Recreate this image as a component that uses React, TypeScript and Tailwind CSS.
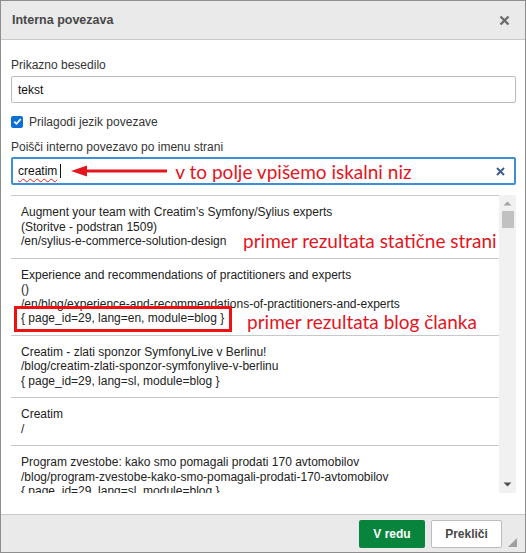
import React from "react";

type Result = { lines: string[] };

const results: Result[] = [
  {
    lines: [
      "Augment your team with Creatim’s Symfony/Sylius experts",
      "(Storitve - podstran 1509)",
      "/en/sylius-e-commerce-solution-design",
    ],
  },
  {
    lines: [
      "Experience and recommendations of practitioners and experts",
      "()",
      "/en/blog/experience-and-recommendations-of-practitioners-and-experts",
      "{ page_id=29, lang=en, module=blog }",
    ],
  },
  {
    lines: [
      "Creatim - zlati sponzor SymfonyLive v Berlinu!",
      "/blog/creatim-zlati-sponzor-symfonylive-v-berlinu",
      "{ page_id=29, lang=sl, module=blog }",
    ],
  },
  { lines: ["Creatim", "/"] },
  {
    lines: [
      "Program zvestobe: kako smo pomagali prodati 170 avtomobilov",
      "/blog/program-zvestobe-kako-smo-pomagali-prodati-170-avtomobilov",
      "{ page_id=29, lang=sl, module=blog }",
    ],
  },
];

const note = "font-['Lato','Open_Sans',sans-serif] text-[19px] leading-none text-[#e3151d]";

const App: React.FC = () => {
  return (
    <div className="w-[526px] h-[553px] flex flex-col bg-white border border-[#8e8e8e] font-['Liberation_Sans',Arial,sans-serif] text-[#333] overflow-hidden">
      {/* header */}
      <div className="h-[39px] shrink-0 flex items-center justify-between pl-[11px] pr-[15px] bg-[#eaeaea] border-b border-[#c9c9c9]">
        <span className="text-[12.5px] font-bold text-[#484848]">Interna povezava</span>
        <svg width="11" height="11" viewBox="0 0 11 11">
          <path d="M1.5 1.5 L9.5 9.5 M9.5 1.5 L1.5 9.5" stroke="#6b6b6b" strokeWidth="2.4" />
        </svg>
      </div>

      {/* body */}
      <div className="flex-1 flex flex-col pt-[18px] pl-[10px] pr-[9px] relative">
        <label className="text-[12px] leading-[15px]">Prikazno besedilo</label>
        <div className="mt-[3px] h-[27px] border border-[#bcbcbc] rounded-[2px] flex items-center px-[6px] text-[12px] text-[#111]">
          tekst
        </div>

        <div className="mt-[11px] flex items-center gap-[6px] h-[15px]">
          <span className="w-[12px] h-[12px] rounded-[2px] bg-[#0b6fd6] flex items-center justify-center">
            <svg width="9" height="9" viewBox="0 0 9 9">
              <path d="M1.3 4.6 L3.5 6.8 L7.8 2" fill="none" stroke="white" strokeWidth="1.8" />
            </svg>
          </span>
          <span className="text-[12px]">Prilagodi jezik povezave</span>
        </div>

        <label className="mt-[11px] text-[12px] leading-[15px]">Poišči interno povezavo po imenu strani</label>
        <div className="mt-[2px] h-[28px] border-2 border-[#3e8fd6] rounded-[2px] flex items-center pl-[5px] pr-[9px] text-[12px] text-[#111]">
          <span className="underline decoration-wavy decoration-[#e02020] decoration-1 underline-offset-[3px]">creatim</span>
          <span className="ml-[3px] w-px h-[14px] bg-[#111]" />
          <svg className="ml-[10px] shrink-0" width="98" height="14" viewBox="0 0 98 14">
            <path d="M14 7 L96 7" stroke="#e3151d" strokeWidth="3" />
            <path d="M0 7 L16 1.5 L16 12.5 Z" fill="#e3151d" />
          </svg>
          <span className={`ml-[6px] ${note}`}>v to polje vpišemo iskalni niz</span>
          <svg className="ml-auto" width="9" height="9" viewBox="0 0 9 9">
            <path d="M1 1 L8 8 M8 1 L1 8" stroke="#40608c" strokeWidth="2" />
          </svg>
        </div>

        {/* results */}
        <div className="mt-[10px] h-[298px] flex">
          <div className="flex-1 border-t border-[#c8c8c8] overflow-hidden relative">
            {results.map((r, i) => (
              <div key={i} className="pl-[10px] pt-[9px] pb-[9px] border-b border-[#c8c8c8] text-[12px] leading-[14.5px] text-[#222] whitespace-nowrap">
                {r.lines.map((l, j) => (
                  <div key={j}>{l}</div>
                ))}
              </div>
            ))}
            <span className={`absolute left-[232px] top-[35px] bg-white pr-[2px] ${note}`}>primer rezultata statične strani</span>
            <span className="absolute left-[3px] top-[110px] w-[218px] h-[26px] border-[3px] border-[#ee1111]" />
            <span className={`absolute left-[236px] top-[116px] ${note}`}>primer rezultata blog članka</span>
          </div>
          <div className="w-[17px] bg-[#f1f1f1] flex flex-col items-center">
            <svg className="mt-[6px]" width="9" height="5" viewBox="0 0 9 5">
              <path d="M0.5 4.5 L4.5 0.5 L8.5 4.5 Z" fill="#a3a3a3" />
            </svg>
            <div className="mt-[5px] w-[12px] h-[17px] bg-[#c1c1c1]" />
            <div className="flex-1" />
            <svg className="mb-[6px]" width="9" height="5" viewBox="0 0 9 5">
              <path d="M0.5 0.5 L4.5 4.5 L8.5 0.5 Z" fill="#505050" />
            </svg>
          </div>
        </div>
      </div>

      {/* footer */}
      <div className="h-[38px] shrink-0 bg-[#eaeaea] border-t border-[#c9c9c9] flex items-center justify-end gap-[6px] pr-[23px] relative">
        <button className="w-[66px] h-[28px] rounded-[2px] bg-[#09843d] text-white text-[12px] font-bold">V redu</button>
        <button className="w-[71px] h-[28px] rounded-[2px] bg-white border border-[#bcbcbc] text-[#484848] text-[12px] font-bold">Prekliči</button>
        <svg className="absolute right-[8px] bottom-[5px]" width="9" height="9" viewBox="0 0 9 9">
          <path d="M9 0 L9 9 L0 9 Z" fill="#a0a0a0" />
        </svg>
      </div>
    </div>
  );
};

export default App;
